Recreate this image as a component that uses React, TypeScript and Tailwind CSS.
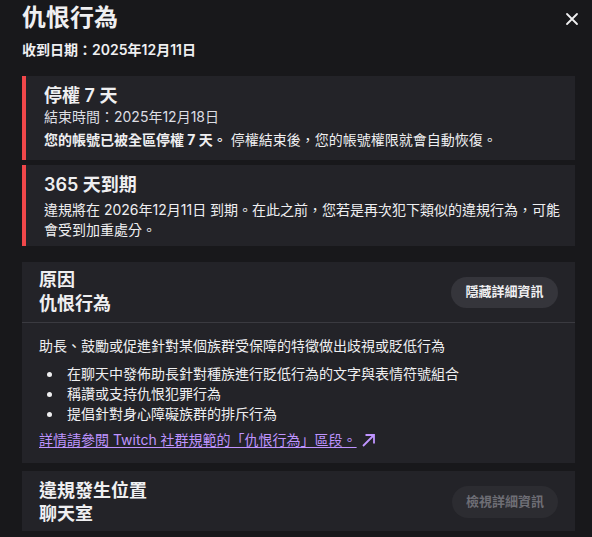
import React from "react";

const font = { fontFamily: 'Inter, "Noto Sans CJK TC", "Noto Sans", "Liberation Sans", sans-serif' };

const bullets = [
  "在聊天中發佈助長針對種族進行貶低行為的文字與表情符號組合",
  "稱讚或支持仇恨犯罪行為",
  "提倡針對身心障礙族群的排斥行為",
];

const CloseIcon = () => (
  <svg width="14" height="14" viewBox="0 0 14 14" fill="none">
    <path d="M2 2L12 12M12 2L2 12" stroke="#efeff1" strokeWidth="1.8" strokeLinecap="round" />
  </svg>
);

const ArrowIcon = () => (
  <svg width="16" height="16" viewBox="0 0 16 16" fill="none" className="inline-block ml-[3px] -mt-[3px]">
    <path d="M3 14L14 3M5.5 3H14V11.5" stroke="#bf94ff" strokeWidth="1.8" />
  </svg>
);

const App = () => {
  return (
    <div className="w-[592px] h-[537px] overflow-hidden bg-[#18181b] text-[#efeff1] pl-[22px] pr-[17px]" style={font}>
      {/* 標題 */}
      <div className="flex items-start justify-between pt-[3px]">
        <h1 className="text-[24px] leading-[30px] font-semibold">仇恨行為</h1>
        <button className="mt-[9px] -mr-[4px] w-[14px] h-[14px] flex items-center justify-center">
          <CloseIcon />
        </button>
      </div>
      <p className="mt-[7px] text-[14px] leading-[20px] font-semibold">收到日期：2025年12月11日</p>

      {/* 停權 */}
      <div className="mt-[16px] flex bg-[#232328]">
        <div className="w-[4px] bg-[#f0474a] shrink-0" />
        <div className="pl-[18px] pr-4 pt-[9px] pb-[10px]">
          <h2 className="text-[18px] leading-[22px] font-semibold">停權 7 天</h2>
          <p className="text-[14px] leading-[20px] text-[#dedee3]">結束時間：2025年12月18日</p>
          <p className="mt-[3px] text-[14px] leading-[20px]">
            <span className="font-bold">您的帳號已被全區停權 7 天。</span> 停權結束後，您的帳號權限就會自動恢復。
          </p>
        </div>
      </div>

      {/* 到期 */}
      <div className="mt-[5px] flex bg-[#232328]">
        <div className="w-[4px] bg-[#f0474a] shrink-0" />
        <div className="pl-[18px] pr-[10px] pt-[9px] pb-[6px]">
          <h2 className="text-[18px] leading-[22px] font-semibold">365 天到期</h2>
          <p className="mt-1 text-[14px] leading-[20px]">
            違規將在 2026年12月11日 到期。在此之前，您若是再次犯下類似的違規行為，可能會受到加重處分。
          </p>
        </div>
      </div>

      {/* 原因 */}
      <div className="mt-[16px] bg-[#232328]">
        <div className="flex items-center justify-between pl-[17px] pr-[17px] pt-[6px] pb-[6px] border-b border-[#3a3a40]">
          <div className="text-[18px] leading-[24px] font-semibold">
            <div>原因</div>
            <div>仇恨行為</div>
          </div>
          <button className="h-[31px] w-[107px] rounded-full bg-[#35353b] text-[13px] font-semibold text-[#efeff1]">
            隱藏詳細資訊
          </button>
        </div>
        <div className="pl-[17px] pr-[17px] pt-[13px] pb-[13px] text-[14px] leading-[20px]">
          <p>助長、鼓勵或促進針對某個族群受保障的特徵做出歧視或貶低行為</p>
          <ul className="mt-[8px]">
            {bullets.map((b, i) => (
              <li key={i} className="flex items-center">
                <span className="w-[28px] shrink-0 flex">
                  <span className="ml-[8px] w-[5px] h-[5px] rounded-full bg-[#efeff1]" />
                </span>
                {b}
              </li>
            ))}
          </ul>
          <p className="mt-[6px]">
            <a className="text-[#bf94ff] underline underline-offset-2">
              詳情請參閱 Twitch 社群規範的「仇恨行為」區段。
            </a>
            <ArrowIcon />
          </p>
        </div>
      </div>

      {/* 違規發生位置 */}
      <div className="mt-[8px] flex items-center justify-between bg-[#232328] pl-[17px] pr-[17px] pt-[8px] pb-[6px]">
        <div className="text-[18px] leading-[23px] font-semibold">
          <div>違規發生位置</div>
          <div>聊天室</div>
        </div>
        <button className="h-[32px] w-[106px] rounded-full bg-[#2c2c31] text-[13px] font-semibold text-[#6e6e75]">
          檢視詳細資訊
        </button>
      </div>
    </div>
  );
};

export default App;
